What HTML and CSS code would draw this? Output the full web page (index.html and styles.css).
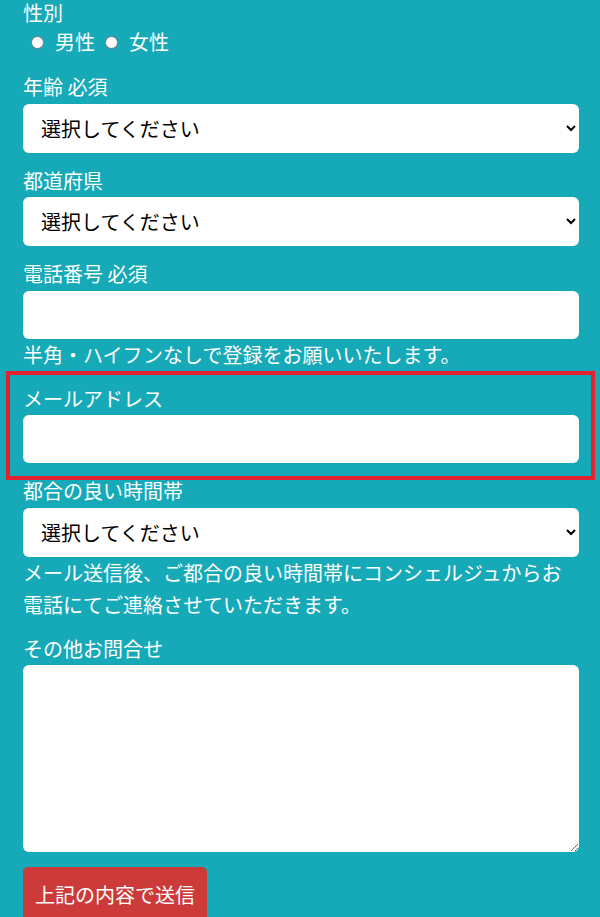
FILE: index.html
```html
<!DOCTYPE html>
<html lang="ja">
<head>
<meta charset="utf-8">
<title>お問合せフォーム</title>
<link rel="stylesheet" href="styles.css">
</head>
<body>
<form class="form">
  <div class="group group-gender">
    <div class="label label-gender">性別</div>
    <div class="radios">
      <label class="radio"><input type="radio" name="sex"><span>男性</span></label>
      <label class="radio"><input type="radio" name="sex"><span>女性</span></label>
    </div>
  </div>

  <div class="group">
    <label class="label">年齢 必須</label>
    <select class="control select">
      <option>選択してください</option>
    </select>
  </div>

  <div class="group">
    <label class="label">都道府県</label>
    <select class="control select">
      <option>選択してください</option>
    </select>
  </div>

  <div class="group">
    <label class="label">電話番号 必須</label>
    <input class="control input" type="tel">
    <p class="help">半角・ハイフンなしで登録をお願いいたします。</p>
  </div>

  <div class="group highlight">
    <label class="label">メールアドレス</label>
    <input class="control input" type="email">
  </div>

  <div class="group">
    <label class="label">都合の良い時間帯</label>
    <select class="control select">
      <option>選択してください</option>
    </select>
    <p class="help">メール送信後、ご都合の良い時間帯にコンシェルジュからお電話にてご連絡させていただきます。</p>
  </div>

  <div class="group">
    <label class="label">その他お問合せ</label>
    <textarea class="control textarea"></textarea>
  </div>

  <button class="submit" type="button">上記の内容で送信</button>
</form>
</body>
</html>
```

FILE: styles.css
```css
* {
  box-sizing: border-box;
}

html, body {
  margin: 0;
  padding: 0;
  background: #16a9b8;
}

body {
  font-family: "Noto Sans CJK JP", "Noto Sans", sans-serif;
  font-size: 20px;
  color: #ffffff;
  padding: 1px 21px 0 23px;
  overflow: hidden;
  height: 917px;
}

.group {
  margin-bottom: 15px;
}

.group-gender {
  margin-bottom: 17px;
}

.label {
  display: block;
  line-height: 26px;
  height: 29.5px;
  padding-bottom: 3.5px;
  color: #ffffff;
}

.label-gender {
  line-height: 24px;
  height: 24px;
  padding-bottom: 0;
}

.radios {
  display: flex;
  align-items: center;
  height: 30px;
  margin-top: 2px;
  padding-left: 8px;
}

.radio {
  display: flex;
  align-items: center;
  margin-right: 10px;
  line-height: 30px;
}

.radio input {
  appearance: none;
  -webkit-appearance: none;
  width: 13px;
  height: 13px;
  margin: 0 11px 0 0;
  border-radius: 50%;
  background: #ffffff;
  border: 1px solid #767676;
}

.control {
  display: block;
  width: 100%;
  border: none;
  border-radius: 6px;
  background: #ffffff;
  font-family: "Noto Sans CJK JP", "Noto Sans", sans-serif;
  font-size: 20px;
  color: #000000;
  outline: none;
}

.select {
  height: 49px;
  padding: 0 8px 0 14px;
}

.input {
  height: 48px;
  padding: 0 14px;
}

.textarea {
  height: 187px;
  padding: 10px 14px;
  resize: vertical;
}

.help {
  margin: 0;
  line-height: 32px;
  color: #ffffff;
}

.highlight {
  position: relative;
}

.highlight::after {
  content: "";
  position: absolute;
  top: -14.5px;
  left: -17px;
  right: -16px;
  bottom: -17px;
  border: 4px solid #e2222e;
  pointer-events: none;
}

.submit {
  display: block;
  margin-top: 13px;
  height: 56px;
  padding: 0 12px;
  border: none;
  border-radius: 5px;
  background: #cc3a3a;
  color: #ffffff;
  font-family: "Noto Sans CJK JP", "Noto Sans", sans-serif;
  font-size: 20px;
  line-height: 28px;
}
```
